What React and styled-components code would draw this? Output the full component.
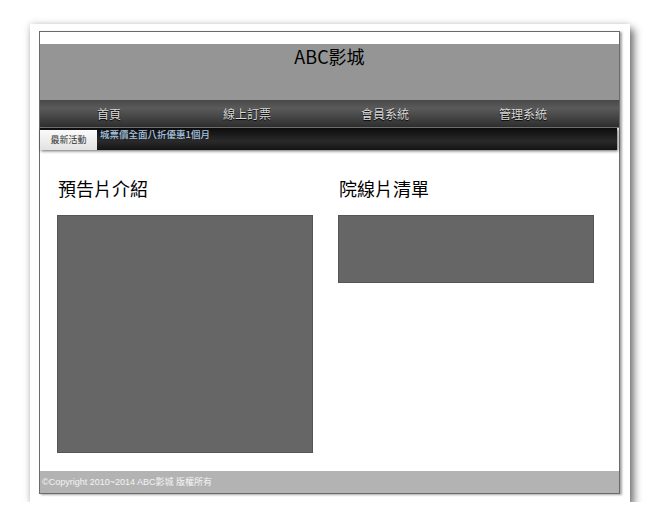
import styled, { createGlobalStyle } from 'styled-components';

const GlobalStyle = createGlobalStyle`
  body {
    margin: 0;
    background: #fff;
    font-family: "Noto Sans CJK TC", "Noto Sans", sans-serif;
  }
`;

const NAV_ITEMS = ['首頁', '線上訂票', '會員系統', '管理系統'];

const App = () => {
  return (
    <Page>
      <GlobalStyle />
      <Card>
        <Frame>
          <Header>ABC影城</Header>
          <Nav>
            {NAV_ITEMS.map((item) => (
              <NavItem key={item}>{item}</NavItem>
            ))}
          </Nav>
          <Ticker>
            <Tab>最新活動</Tab>
            <TickerText>城票價全面八折優惠1個月</TickerText>
          </Ticker>
          <Content>
            <Column>
              <Heading>預告片介紹</Heading>
              <Panel $height={238} />
            </Column>
            <Column>
              <Heading>院線片清單</Heading>
              <Panel $height={68} />
            </Column>
          </Content>
          <Footer>©Copyright 2010~2014 ABC影城 版權所有</Footer>
        </Frame>
      </Card>
    </Page>
  );
};

const Page = styled.div`
  padding: 24px 0 0 30px;
`;

const Card = styled.div`
  width: 600px;
  height: 478px;
  box-sizing: border-box;
  padding: 7px 10px 0 9px;
  background: #fff;
  box-shadow: 4px 5px 8px rgba(0, 0, 0, 0.55), -1px -1px 6px rgba(0, 0, 0, 0.12);
`;

const Frame = styled.div`
  width: 581px;
  height: 463px;
  box-sizing: border-box;
  border: 1px solid #6a6a6a;
  box-shadow: 2px 1px 2px rgba(0, 0, 0, 0.35);
  padding-top: 12px;
  display: flex;
  flex-direction: column;
`;

const Header = styled.div`
  height: 56px;
  background: #959595;
  color: #000;
  font-size: 18px;
  font-weight: 400;
  text-align: center;
  line-height: 24px;
`;

const Nav = styled.ul`
  display: flex;
  margin: 0;
  padding: 0;
  list-style: none;
  height: 28px;
  box-sizing: border-box;
  background: linear-gradient(#484848, #5a5a5a 30%, #2e2e2e);
  border-bottom: 1px solid #7a7a7a;
`;

const NavItem = styled.li`
  width: 138px;
  text-align: center;
  color: #d8d8d8;
  font-size: 12px;
  line-height: 28px;
  text-shadow: 0 1px 1px #000;
`;

const Ticker = styled.div`
  display: flex;
  height: 22px;
  margin-right: 2px;
  background: linear-gradient(#0c0c0c, #2a2a2a 60%, #141414);
  box-shadow: 1px 1px 3px rgba(0, 0, 0, 0.6);
`;

const Tab = styled.div`
  width: 57px;
  margin-top: 2px;
  background: linear-gradient(#fafafa, #e2e2e2);
  color: #333;
  font-size: 9px;
  text-align: center;
  line-height: 20px;
`;

const TickerText = styled.div`
  padding-left: 3px;
  color: #a8c4e0;
  font-size: 9.5px;
  font-weight: 500;
  line-height: 12px;
`;

const Content = styled.div`
  flex: 1;
  display: flex;
  gap: 25px;
  padding: 27px 0 0 17px;
`;

const Column = styled.div`
  width: 256px;
  display: flex;
  flex-direction: column;
`;

const Heading = styled.h2`
  margin: 0 0 15px 1px;
  font-size: 18px;
  font-weight: 400;
  line-height: 23px;
  color: #000;
`;

const Panel = styled.div`
  height: ${(p) => p.$height}px;
  box-sizing: border-box;
  background: #666;
  border: 1px solid #555;
`;

const Footer = styled.div`
  height: 22px;
  background: #b3b3b3;
  color: #f4f4f4;
  font-family: "Liberation Sans", "Noto Sans CJK TC", sans-serif;
  font-size: 9px;
  line-height: 22px;
  padding-left: 2px;
`;

export default App;
